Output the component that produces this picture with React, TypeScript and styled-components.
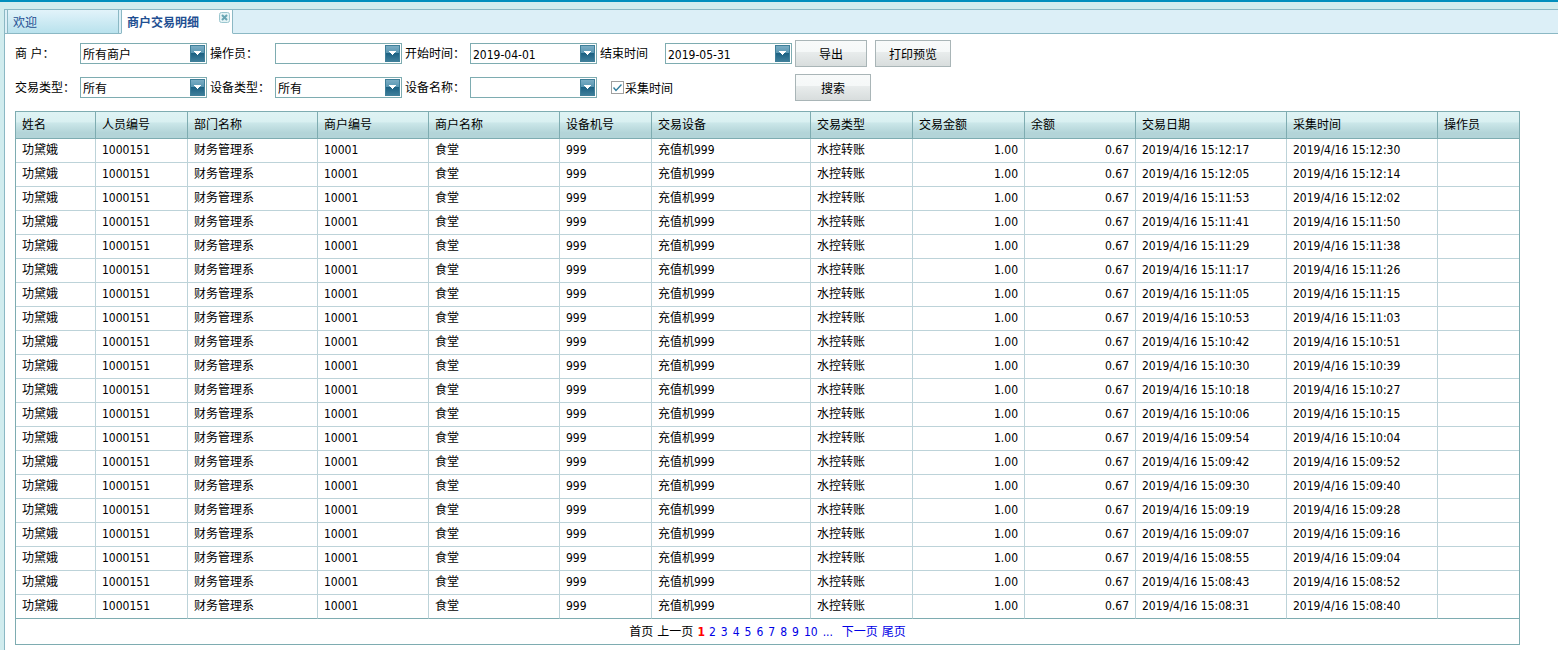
import React from "react";
import styled, { createGlobalStyle, css } from "styled-components";

const Global = createGlobalStyle`
  * { box-sizing: border-box; }
  body { margin: 0; background: #d1ecee; }
  body, button, input, select {
    font-family: "DejaVu Sans Condensed", "Noto Sans CJK SC", sans-serif;
    font-size: 12px;
    color: #000;
  }
`;

const Page = styled.div`
  min-height: 100vh;
  display: flex;
  flex-direction: column;
  padding: 7px 0 0 4px;
  border-top: 2px solid #008ebd;
`;
const Panel = styled.div`
  flex: 1;
  display: flex;
  flex-direction: column;
  border: solid #8bb8c4;
  border-width: 1px 0 0 1px;
  background: #fff;
`;
const TabBar = styled.nav`
  display: flex;
  height: 24px;
  padding-left: 2px;
  gap: 2px;
  background: #dceff7;
  border-bottom: 1px solid #8bb8c4;
`;
const Tab = styled.div<{ $active?: boolean }>`
  display: flex;
  justify-content: space-between;
  width: 112px;
  height: 24px;
  padding: 0 2px 0 5px;
  border: 1px solid #8bb8c4;
  border-top: 0;
  border-bottom-color: ${(p) => (p.$active ? "#fff" : "#8bb8c4")};
  background: ${(p) => (p.$active ? "#fff" : "linear-gradient(#e2f3fa, #b9e2ed)")};
`;
const TabLink = styled.a<{ $active?: boolean }>`
  color: #1f4f92;
  line-height: 26px;
  text-decoration: none;
  font-weight: ${(p) => (p.$active ? 700 : 400)};
`;
const CloseButton = styled.button`
  width: 11px;
  height: 11px;
  margin-top: 2px;
  padding: 0;
  border: 0;
  background: none;
  line-height: 0;
`;

const Filters = styled.form`
  display: grid;
  grid-template-columns: 65px 130px 65px 130px 65px 130px 65px 130px auto;
  grid-auto-rows: 28px;
  row-gap: 6px;
  align-items: center;
  justify-content: start;
  padding: 5px 10px 10px;
`;
const FieldLabel = styled.label`
  padding-top: 2px;
  line-height: 20px;
  white-space: pre;
`;
const Combo = styled.span`
  position: relative;
  display: flex;
  width: 127px;
  height: 21px;
  border: 1px solid #7eacb1;
  background: #fff;
`;
const comboText = css`
  flex: 1;
  width: 100%;
  min-width: 0;
  padding: 3px 20px 0 2px;
  border: 0;
  outline: 0;
  background: none;
  appearance: none;
`;
const ComboSelect = styled.select`
  ${comboText}
`;
const ComboInput = styled.input`
  ${comboText}
`;
const ArrowBox = styled.span`
  position: absolute;
  top: 1px;
  right: 1px;
  width: 15px;
  height: 17px;
  border: 1px solid #3f7f99;
  background: linear-gradient(#7badc4 0, #5a97b2 45%, #1d6283 50%, #3d7d9a 100%);
  pointer-events: none;
  line-height: 0;
`;
const Check = styled.label`
  grid-column: 7 / span 2;
  display: flex;
  align-items: center;
  gap: 1px;
  padding-left: 11px;
`;
const CheckBox = styled.input`
  appearance: none;
  width: 13px;
  height: 13px;
  margin: 1px 0 0;
  border: 1px solid #a0a0a0;
  background: #fff;
  &:checked {
    background: no-repeat center / 9px 9px
      url("data:image/svg+xml,%3Csvg xmlns='http://www.w3.org/2000/svg' viewBox='0 0 9 9'%3E%3Cpath d='M.5 4.5 3 7.5 8.5 1.5' fill='none' stroke='%23307c9c' stroke-width='1.4'/%3E%3C/svg%3E");
  }
`;
const Actions = styled.div`
  display: flex;
  gap: 8px;
`;
const Button = styled.button<{ $narrow?: boolean }>`
  width: ${(p) => (p.$narrow ? 72 : 76)}px;
  height: 27px;
  padding: 0;
  border: 1px solid #a9b5b7;
  background: linear-gradient(#f8fafa 0, #f5f8f8 42%, #e8ecec 46%, #d8dddd 100%);
`;

const Results = styled.section`
  margin: 0 38px 5px 10px;
  border: 1px solid #7eacb1;
`;
const Table = styled.table`
  width: 100%;
  table-layout: fixed;
  border-collapse: separate;
  border-spacing: 0;
`;
const HeadCell = styled.th`
  height: 27px;
  padding: 0 6px;
  text-align: left;
  font-weight: 400;
  line-height: 18px;
  border: solid #7eacb1;
  border-width: 0 1px 1px 0;
  background: linear-gradient(#dff3f4 0, #d9f0f1 38%, #cbe7e9 42%, #b3d4d8 80%, #b3d4d8 100%);
  &:last-child { border-right: 0; }
`;
const Cell = styled.td<{ $number?: boolean }>`
  height: 24px;
  padding: 0 6px 2px;
  line-height: 18px;
  white-space: nowrap;
  text-align: ${(p) => (p.$number ? "right" : "left")};
  border: solid #bdd3d9;
  border-width: 0 1px 1px 0;
  &:last-child { border-right: 0; }
  tr:last-child > & { border-bottom-color: #7eacb1; }
`;
const Pager = styled.nav`
  display: flex;
  justify-content: center;
  gap: 4px;
  height: 25px;
  line-height: 26px;
`;
const PageLink = styled.a`
  color: #0000e6;
  text-decoration: none;
`;
const PageNumber = styled(PageLink)`
  padding-right: 1px;
`;
const MorePages = styled(PageLink)`
  width: 15px;
`;
const Current = styled.strong`
  color: #f00;
`;

const columns: [string, number][] = [
  ["姓名", 80], ["人员编号", 92], ["部门名称", 130], ["商户编号", 111], ["商户名称", 131],
  ["设备机号", 92], ["交易设备", 159], ["交易类型", 102], ["交易金额", 112], ["余额", 111],
  ["交易日期", 151], ["采集时间", 151], ["操作员", 81],
];
const totalWidth = columns.reduce((sum, [, w]) => sum + w, 0);
const times: [string, string][] = [
  ["15:12:17", "15:12:30"], ["15:12:05", "15:12:14"], ["15:11:53", "15:12:02"], ["15:11:41", "15:11:50"],
  ["15:11:29", "15:11:38"], ["15:11:17", "15:11:26"], ["15:11:05", "15:11:15"], ["15:10:53", "15:11:03"],
  ["15:10:42", "15:10:51"], ["15:10:30", "15:10:39"], ["15:10:18", "15:10:27"], ["15:10:06", "15:10:15"],
  ["15:09:54", "15:10:04"], ["15:09:42", "15:09:52"], ["15:09:30", "15:09:40"], ["15:09:19", "15:09:28"],
  ["15:09:07", "15:09:16"], ["15:08:55", "15:09:04"], ["15:08:43", "15:08:52"], ["15:08:31", "15:08:40"],
];

const Arrow = () => (
  <ArrowBox aria-hidden="true">
    <svg width="13" height="15" viewBox="0 0 13 15" shapeRendering="crispEdges">
      <path d="M3 5h7v1H9v1H8v1H7v1H6V8H5V7H4V6H3z" fill="#fff" />
    </svg>
  </ArrowBox>
);

function Field({ id, label, value = "", date }: { id: string; label: string; value?: string; date?: boolean }) {
  return (
    <>
      <FieldLabel htmlFor={id}>{label}</FieldLabel>
      <Combo>
        {date ? (
          <ComboInput id={id} defaultValue={value} />
        ) : (
          <ComboSelect id={id} defaultValue={value}><option>{value}</option></ComboSelect>
        )}
        <Arrow />
      </Combo>
    </>
  );
}

export default function App() {
  return (
    <Page>
      <Global />
      <Panel>
        <TabBar>
          <Tab><TabLink href="#welcome">欢迎</TabLink></Tab>
          <Tab $active>
            <TabLink $active href="#detail">商户交易明细</TabLink>
            <CloseButton aria-label="关闭">
              <svg width="11" height="11" viewBox="0 0 11 11">
                <rect x=".5" y=".5" width="10" height="10" rx="2" fill="#e4f3f5" stroke="#9bc6cf" />
                <path d="M3 3l5 5M8 3L3 8" stroke="#69a5b3" strokeWidth="2" />
              </svg>
            </CloseButton>
          </Tab>
        </TabBar>
        <Filters onSubmit={(e) => e.preventDefault()}>
          <Field id="merchant" label="商 户：" value="所有商户" />
          <Field id="operator" label="操作员：" />
          <Field id="start" label="开始时间：" value="2019-04-01" date />
          <Field id="end" label="结束时间" value="2019-05-31" date />
          <Actions>
            <Button type="button" $narrow>导出</Button>
            <Button type="button">打印预览</Button>
          </Actions>
          <Field id="trade" label="交易类型：" value="所有" />
          <Field id="device" label="设备类型：" value="所有" />
          <Field id="deviceName" label="设备名称：" />
          <Check><CheckBox type="checkbox" defaultChecked />采集时间</Check>
          <Actions><Button type="submit">搜索</Button></Actions>
        </Filters>
        <Results>
          <Table>
            <colgroup>
              {columns.map(([name, w]) => <col key={name} style={{ width: `${(w / totalWidth) * 100}%` }} />)}
            </colgroup>
            <thead><tr>{columns.map(([name]) => <HeadCell key={name}>{name}</HeadCell>)}</tr></thead>
            <tbody>
              {times.map(([traded, collected]) => (
                <tr key={traded}>
                  <Cell>功黛娥</Cell>
                  <Cell>1000151</Cell>
                  <Cell>财务管理系</Cell>
                  <Cell>10001</Cell>
                  <Cell>食堂</Cell>
                  <Cell>999</Cell>
                  <Cell>充值机999</Cell>
                  <Cell>水控转账</Cell>
                  <Cell $number>1.00</Cell>
                  <Cell $number>0.67</Cell>
                  <Cell>2019/4/16 {traded}</Cell>
                  <Cell>2019/4/16 {collected}</Cell>
                  <Cell />
                </tr>
              ))}
            </tbody>
          </Table>
          <Pager>
            <span>首页</span>
            <span>上一页</span>
            <Current>1</Current>
            {[2, 3, 4, 5, 6, 7, 8, 9, 10].map((n) => (
              <PageNumber key={n} href={`#page-${n}`}>{n}</PageNumber>
            ))}
            <MorePages href="#page-11">...</MorePages>
            <PageLink href="#next">下一页</PageLink>
            <PageLink href="#last">尾页</PageLink>
          </Pager>
        </Results>
      </Panel>
    </Page>
  );
}
